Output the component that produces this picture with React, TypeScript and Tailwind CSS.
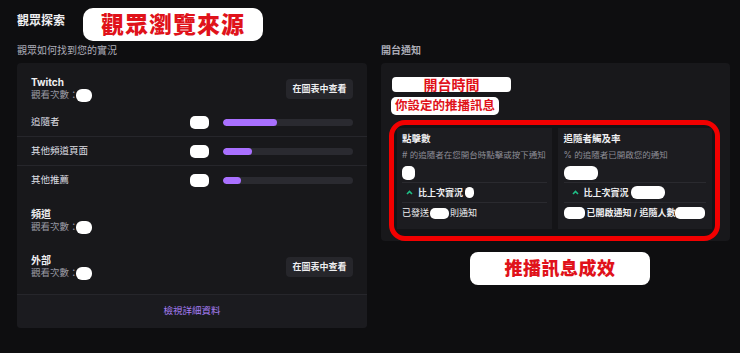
import React from "react";

const font = "font-['Inter','Noto_Sans_CJK_TC',sans-serif]";

function Pill({ className }: { className: string }) {
  return <span className={`rounded-[5px] bg-white ${className}`} />;
}

function ViewButton() {
  return (
    <button className="flex h-[20px] w-[67px] items-center justify-center rounded-[4px] bg-[#26262b] text-[9px] font-semibold text-[#efeff1]">
      在圖表中查看
    </button>
  );
}

// traffic sources shown as rows with a share bar
const sources = [
  { name: "追隨者", fill: 54 },
  { name: "其他頻道頁面", fill: 29 },
  { name: "其他推薦", fill: 18 },
];

function SourceBlock({ title, button }: { title: string; button?: boolean }) {
  return (
    <div className="flex items-center justify-between">
      <div>
        <div className="h-[12px] text-[10px] leading-[12px] font-bold text-[#efeff1]">{title}</div>
        <div className="mt-[1px] flex h-[13px] items-center text-[9.5px] text-[#9a9aa3]">
          觀看次數：
          <Pill className="ml-[-3px] block h-[13px] w-[16px] rounded-[6px]" />
        </div>
      </div>
      {button && <ViewButton />}
    </div>
  );
}

function Caret() {
  return (
    <svg width="7" height="5" viewBox="0 0 7 5" className="mr-[5px]">
      <path d="M1 4 L3.5 1.5 L6 4" fill="none" stroke="#1fbf86" strokeWidth="1.6" />
    </svg>
  );
}

export default function App() {
  return (
    <div className={`relative min-h-[353px] w-[740px] bg-[#0e0e10] pt-[13px] pl-[17px] pr-[10px] ${font}`}>
      {/* page heading + annotation */}
      <div className="relative h-[16px] text-[12px] leading-[16px] font-bold text-[#efeff1]">
        觀眾探索
        <div className="absolute left-[66px] top-[-5px] flex h-[33px] w-[180px] items-center justify-center rounded-[10px] bg-white text-[23px] font-black tracking-[1px] text-[#e0121a]">
          觀眾瀏覽來源
        </div>
      </div>

      <div className="mt-[15px] grid grid-cols-[350px_349px] gap-[14px]">
        {/* left column */}
        <div>
          <div className="h-[12px] text-[10px] leading-[12px] text-[#adadb8]">觀眾如何找到您的實況</div>
          <div className="mt-[7px] overflow-hidden rounded-[4px] bg-[#18181b]">
            <div className="px-[14px] pt-[13px]">
              <SourceBlock title="Twitch" button />
            </div>
            <div className="mt-[6px]">
              {sources.map((s, i) => (
                <div
                  key={s.name}
                  className={`flex h-[29px] items-center px-[14px] ${i < sources.length - 1 ? "border-b border-[#26262b]" : ""}`}
                >
                  <span className="flex-1 text-[9.5px] text-[#dedee3]">{s.name}</span>
                  <Pill className="block h-[13px] w-[19px]" />
                  <div className="ml-[14px] h-[7px] w-[130px] overflow-hidden rounded-full bg-[#2a2a30]">
                    <div className="h-full rounded-full bg-[#a970ff]" style={{ width: `${s.fill}px` }} />
                  </div>
                </div>
              ))}
            </div>
            <div className="px-[14px] pt-[13px]">
              <SourceBlock title="頻道" />
            </div>
            <div className="px-[14px] pt-[20px] pb-[14px]">
              <SourceBlock title="外部" button />
            </div>
            <div className="flex h-[34px] items-center justify-center border-t border-[#26262b] bg-[#1b1b1f] text-[9.5px] text-[#a67ef5]">
              檢視詳細資料
            </div>
          </div>
        </div>

        {/* right column */}
        <div>
          <div className="h-[12px] text-[10px] leading-[12px] font-semibold text-[#adadb8]">開台通知</div>
          <div className="mt-[7px] rounded-[4px] bg-[#18181b] pt-[14px] pl-[8px] pr-[10px]">
            <div className="ml-[3px] flex h-[15px] w-[119px] items-center justify-center rounded-[4px] bg-white text-[14px] font-bold text-[#e0121a]">
              開台時間
            </div>
            <div className="ml-[2px] mt-[5px] flex h-[18px] w-[108px] items-center justify-center rounded-[5px] bg-white text-[12.5px] font-bold text-[#e0121a]">
              你設定的推播訊息
            </div>
            <div className="mt-[5px] rounded-[16px] border-[5px] border-[#f20000] bg-[#141417] px-[3px] pt-[3px] pb-[7px]">
              <div className="grid grid-cols-2 gap-[6px]">
                <div className="bg-[#1c1c20] px-[5px] pt-[6px] pb-[6px]">
                  <div className="text-[9.5px] leading-[10px] font-bold text-[#efeff1]">點擊數</div>
                  <div className="mt-[6px] text-[8.5px] leading-[11px] text-[#8d8d96]"># 的追隨者在您開台時點擊或按下通知</div>
                  <Pill className="mt-[5px] block h-[14px] w-[13px]" />
                  <div className="mt-[2px] flex h-[21px] items-center border-y border-[#2a2a2f] pl-[4px] text-[9px] font-semibold text-[#efeff1]">
                    <Caret />
                    比上次實況
                    <Pill className="ml-[2px] block h-[11px] w-[9px] rounded-[3px]" />
                  </div>
                  <div className="flex h-[20px] items-center text-[9px] text-[#efeff1]">
                    已發送
                    <Pill className="mx-[1px] block h-[11px] w-[19px] rounded-[3px]" />
                    則通知
                  </div>
                </div>
                <div className="bg-[#1c1c20] px-[6px] pt-[6px] pb-[6px]">
                  <div className="text-[9.5px] leading-[10px] font-bold text-[#efeff1]">追隨者觸及率</div>
                  <div className="mt-[6px] text-[8.5px] leading-[11px] text-[#8d8d96]">% 的追隨者已開啟您的通知</div>
                  <Pill className="mt-[5px] block h-[14px] w-[34px] rounded-[6px]" />
                  <div className="mt-[2px] flex h-[21px] items-center border-y border-[#2a2a2f] pl-[8px] text-[9px] font-semibold text-[#efeff1]">
                    <Caret />
                    比上次實況
                    <Pill className="ml-[2px] block h-[13px] w-[34px] rounded-[6px]" />
                  </div>
                  <div className="flex h-[20px] items-center text-[9px] font-semibold text-[#efeff1]">
                    <Pill className="mr-[2px] block h-[12px] w-[21px] rounded-[4px]" />
                    已開啟通知 / 追隨人數
                    <Pill className="block h-[12px] w-[30px] rounded-[5px]" />
                  </div>
                </div>
              </div>
            </div>
          </div>
          <div className="ml-[89px] mt-[11px] flex h-[33px] w-[180px] items-center justify-center rounded-[8px] bg-white text-[18px] font-black tracking-[0.5px] text-[#e0121a]">
            推播訊息成效
          </div>
        </div>
      </div>
    </div>
  );
}
